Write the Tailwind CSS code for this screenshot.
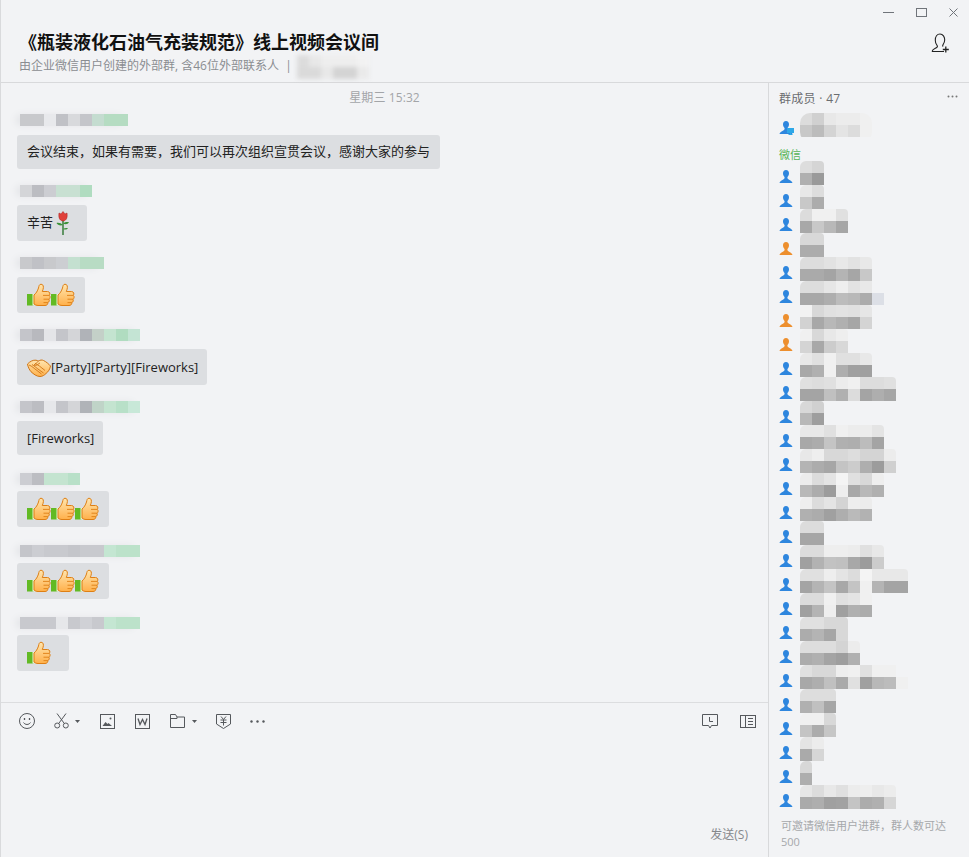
<!DOCTYPE html>
<html lang="zh-CN">
<head>
  <meta charset="UTF-8" />
  <meta name="viewport" content="width=device-width, initial-scale=1.0" />
  <title>群聊</title>
  <script src="https://cdn.jsdelivr.net/npm/@tailwindcss/browser@4"></script>
</head>
<body class="bg-[#f2f3f5] font-['Open_Sans','Noto_Sans_CJK_SC',sans-serif] text-[#222]">

<svg class="absolute w-0 h-0">
  <defs>
    <linearGradient id="hand" x1="0" y1="0" x2="0" y2="1">
      <stop offset="0" stop-color="#ffe6b0" />
      <stop offset="1" stop-color="#ffb04a" />
    </linearGradient>
  </defs>
  <symbol id="thumb" viewBox="0 0 24 24">
    <rect x="0" y="11" width="6.500" height="11.500" fill="#62ba24" />
    <rect x="5.500" y="11" width="1.500" height="11.500" fill="#e4f4cc" />
    <path d="M7 12C9 10.500 10.500 8 11.500 5 12 3 12 1.500 14 1.200 16.500 1.200 16.800 4 16 6.500L15.300 8.500H20.500C22.800 8.500 23.500 11 22.300 12.300 23.600 13.500 23.200 15.500 22 16.200 22.800 17.500 22 19.200 20.800 19.600 21 21.200 20 22.500 18 22.500H11C9.500 22.500 8.200 22 7 21Z" fill="url(#hand)" stroke="#de7f14" stroke-width="1" />
    <path d="M16 12.400h6M16.500 16.200h5.500M16.500 19.600h4.300" stroke="#de7f14" stroke-width=".9" fill="none" />
  </symbol>
  <symbol id="shake" viewBox="0 0 24 18">
    <path d="M.5 5C3 2.500 6 .8 9 1.200c1 .2 1.800.6 2.500.8 1.500-1 3.500-1.300 5-.5 2.500 1.200 5 3.200 7 5.500-.5 3-2 5.500-4.500 7.500-1.500 1.500-3.500 3-6 3-3.500 0-6.500-2.500-9-4.800C2.500 11 1 8 .5 5z" fill="url(#hand)" stroke="#cf7414" stroke-width="1" />
    <path d="M2 6c3 1 5 3.500 8 5.500l4.500 3.500M5 5.500c2.500 1.500 5 4 8 6l3.500 2.500M8 4.500c3 1 5.500 3.500 10 7M11.500 2c-1.500 1.500-3 3-4.500 4 1.800 1 3.500 0 5-1.500l1-.5" fill="none" stroke="#cf7414" stroke-width=".9" />
  </symbol>
  <symbol id="rose" viewBox="0 0 16 24">
    <path d="M8 9v15" stroke="#1f6e22" stroke-width="1.300" />
    <path d="M8 14C6 12 3.500 11.500 1.500 12c1 2 4 3 6.500 2zM8 12.500c2-1.500 4-1.800 6-1.300-1 2-3.500 2.600-6 1.300zM8 18c1.500-1 3.500-1.300 5-.7-1 1.500-3.200 1.700-5 .7z" fill="#3a9138" />
    <path d="M4 2 6 3 8 .5 10 3l2-1c.5 3.500.2 7.500-4 8-4.200-.5-4.500-4.500-4-8z" fill="#e0403a" stroke="#a81e1c" stroke-width=".5" />
  </symbol>
  <symbol id="person" viewBox="0 0 14 14">
    <path d="M7 0c1.900 0 3 1.400 3 3.300 0 1.700-.8 3-1.500 3.800-.2.700-.1 1.500.5 2 1.300.9 3.700 1.600 4.600 3.900H.4c.9-2.300 3.300-3 4.600-3.900.6-.5.700-1.300.5-2C4.800 6.300 4 5 4 3.300 4 1.400 5.100 0 7 0z" fill="currentColor" />
  </symbol>
</svg>

<div class="w-[969px] h-[857px] border-l border-[#d9dadc] flex flex-col overflow-hidden">
  <!-- header -->
  <header class="h-[83px] shrink-0 border-b border-[#d8d9db] flex flex-col">
    <div class="h-[24px] flex justify-end items-center text-[#70747a] pr-[11px]">
      <svg class="w-[11px] h-[9px] mr-[22px]" viewBox="0 0 11 9"><path d="M0 4.500h11" stroke="currentColor" fill="none" /></svg>
      <svg class="w-[11px] h-[9px] mr-[22px]" viewBox="0 0 11 9"><rect x=".5" y=".5" width="10" height="8" stroke="currentColor" fill="none" /></svg>
      <svg class="w-[9px] h-[9px]" viewBox="0 0 9 9"><path d="M.5.5l8 8M8.500.5l-8 8" stroke="currentColor" fill="none" /></svg>
    </div>
    <div class="flex justify-between pl-[18px] pr-[18px]">
      <div>
        <h1 class="text-[18px] leading-[24px] mt-[6px] font-bold text-[#111]">《瓶装液化石油气充装规范》线上视频会议间</h1>
        <div class="flex items-start mt-[3px]">
          <span class="text-[12px] leading-[18px] text-[#8a8d91] whitespace-pre">由企业微信用户创建的外部群, 含46位外部联系人  |</span>
          <div class="ml-[5px] -mt-[2px] blur-[2px]" data-mosaic="[['dcdcdc','e8e8e8','eeeeee','eeeeee','eeeeee','f2f2f2'],['dadada','dadada','e8e8e8','d4d4d4','d4d4d4','eaeaea']]"></div>
        </div>
      </div>
      <svg class="w-[20px] h-[20px] mt-[9px]" viewBox="0 0 20 20" fill="none" stroke="#222" stroke-width="1.100">
        <path d="M1 18.500h12M1 18.500c.6-2.600 3.500-3 5-4.200.7-.7.500-1.700-.2-2.500-1-1.200-1.500-2.700-1.500-4.600C4.300 4 6 1 9 1s4.700 3 4.700 5.700c0 1.900-.5 3.400-1.500 4.600-.6.800-.8 1.500-.2 2.300" />
        <path d="M14.800 13.500v6M11.800 16.500h6" stroke-width="1.300" />
      </svg>
    </div>
  </header>

  <div class="flex flex-1 min-h-0">
    <!-- chat column -->
    <main class="w-[768px] shrink-0 border-r border-[#d8d9db] flex flex-col">
      <section class="h-[620px] shrink-0 border-b border-[#dcdddf] pl-[16px]">
        <div class="w-[735px] text-center text-[12px] leading-[18px] tracking-[0.1px] text-[#a3a5a8] mt-[6px]">星期三 15:32</div>

        <div class="mt-[7px] ml-[3px] w-fit rounded-[6px] shadow-[-5px_0_6px_#e6e7ea]" id="name1"></div>
        <div class="mt-[9px] w-fit h-[34px] rounded-[3px] bg-[#dcdee1] px-[10px] flex items-center text-[13px]">会议结束，如果有需要，我们可以再次组织宣贯会议，感谢大家的参与</div>

        <div class="mt-[16px] ml-[3px] w-fit rounded-[6px] shadow-[-5px_0_6px_#e6e7ea]" id="name2"></div>
        <div class="mt-[8px] w-[70px] h-[36px] rounded-[3px] bg-[#dcdee1] pl-[10px] flex items-center text-[13px]">
          辛苦<svg class="w-[16px] h-[24px] ml-[2px]"><use href="#rose" /></svg>
        </div>

        <div class="mt-[16px] ml-[3px] w-fit rounded-[6px] shadow-[-5px_0_6px_#e6e7ea]" id="name3"></div>
        <div class="mt-[8px] w-[68px] h-[36px] rounded-[3px] bg-[#dcdee1] pl-[10px] flex items-center">
          <svg class="w-[24px] h-[24px]"><use href="#thumb" /></svg><svg class="w-[24px] h-[24px]"><use href="#thumb" /></svg>
        </div>

        <div class="mt-[16px] ml-[3px] w-fit rounded-[6px] shadow-[-5px_0_6px_#e6e7ea]" id="name4"></div>
        <div class="mt-[8px] w-[190px] h-[36px] rounded-[3px] bg-[#dcdee1] pl-[10px] pt-[1px] flex items-center text-[13px]">
          <svg class="w-[24px] h-[18px]"><use href="#shake" /></svg>[Party][Party][Fireworks]
        </div>

        <div class="mt-[16px] ml-[3px] w-fit rounded-[6px] shadow-[-5px_0_6px_#e6e7ea]" id="name5"></div>
        <div class="mt-[8px] w-[86px] h-[34px] rounded-[3px] bg-[#dcdee1] pl-[10px] pt-[1px] flex items-center text-[13px]">[Fireworks]</div>

        <div class="mt-[18px] ml-[3px] w-fit rounded-[6px] shadow-[-5px_0_6px_#e6e7ea]" id="name6"></div>
        <div class="mt-[6px] w-[92px] h-[36px] rounded-[3px] bg-[#dcdee1] pl-[10px] flex items-center">
          <svg class="w-[24px] h-[24px]"><use href="#thumb" /></svg><svg class="w-[24px] h-[24px]"><use href="#thumb" /></svg><svg class="w-[24px] h-[24px]"><use href="#thumb" /></svg>
        </div>

        <div class="mt-[18px] ml-[3px] w-fit rounded-[6px] shadow-[-5px_0_6px_#e6e7ea]" id="name7"></div>
        <div class="mt-[6px] w-[92px] h-[36px] rounded-[3px] bg-[#dcdee1] pl-[10px] flex items-center">
          <svg class="w-[24px] h-[24px]"><use href="#thumb" /></svg><svg class="w-[24px] h-[24px]"><use href="#thumb" /></svg><svg class="w-[24px] h-[24px]"><use href="#thumb" /></svg>
        </div>

        <div class="mt-[18px] ml-[3px] w-fit rounded-[6px] shadow-[-5px_0_6px_#e6e7ea]" id="name8"></div>
        <div class="mt-[6px] w-[52px] h-[36px] rounded-[3px] bg-[#dcdee1] pl-[10px] flex items-center">
          <svg class="w-[24px] h-[24px]"><use href="#thumb" /></svg>
        </div>
      </section>

      <!-- toolbar -->
      <div class="h-[36px] flex items-center pl-[18px] pr-[12px] text-[#55585c] shrink-0">
        <svg class="w-[16px] h-[16px]" viewBox="0 0 16 16" fill="none" stroke="currentColor"><circle cx="8" cy="8" r="7.500" /><path d="M4.500 9.500c1.600 2.600 5.400 2.600 7 0" /><path d="M5.500 5v2M10.500 5v2" stroke-width="1.300" /></svg>
        <svg class="w-[16px] h-[16px] ml-[19px]" viewBox="0 0 16 16" fill="none" stroke="currentColor"><circle cx="3.200" cy="12.500" r="2.500" /><circle cx="11.800" cy="12.500" r="2.500" /><path d="M4.700 10.500 12 .5M10.300 10.500 3 .5" /></svg>
        <svg class="w-[5px] h-[3px] ml-[5px]" viewBox="0 0 5 3"><path d="M0 0h5L2.500 3z" fill="currentColor" /></svg>
        <svg class="w-[15px] h-[15px] ml-[20px]" viewBox="0 0 15 15" fill="none" stroke="currentColor"><rect x=".5" y=".5" width="14" height="14" /><path d="M2.500 12l3-4 2 2 1-1 3.500 3z" fill="currentColor" stroke="none" /><circle cx="10.500" cy="4.500" r="1" fill="currentColor" stroke="none" /></svg>
        <svg class="w-[15px] h-[15px] ml-[20px]" viewBox="0 0 15 15" fill="none" stroke="currentColor"><rect x=".5" y=".5" width="14" height="14" /><path d="M3 4.500l2 6 2.500-5 2.500 5 2-6" stroke-width="1.300" /></svg>
        <svg class="w-[15px] h-[14px] ml-[20px]" viewBox="0 0 15 14" fill="none" stroke="currentColor"><path d="M.5 13.500V.5h5l1.500 2.500h7.500v10.500zM.5 4.500H7L7 3" /></svg>
        <svg class="w-[5px] h-[3px] ml-[7px]" viewBox="0 0 5 3"><path d="M0 0h5L2.500 3z" fill="currentColor" /></svg>
        <svg class="w-[15px] h-[16px] ml-[19px]" viewBox="0 0 15 16" fill="none" stroke="currentColor"><path d="M.5 1.500h14v9.500L7.500 15.500.5 11z" /><path d="M5 3.500l2.500 3 2.500-3M4.500 7h6M4.500 9.500h6M7.500 6.500v6" /></svg>
        <svg class="w-[15px] h-[3px] ml-[19px]" viewBox="0 0 15 3"><circle cx="1.500" cy="1.500" r="1.200" fill="currentColor" /><circle cx="7.500" cy="1.500" r="1.200" fill="currentColor" /><circle cx="13.500" cy="1.500" r="1.200" fill="currentColor" /></svg>
        <svg class="w-[16px] h-[15px] ml-auto" viewBox="0 0 16 15" fill="none" stroke="currentColor"><path d="M.5.500h15v11H9.500L8 14l-1.500-2.500h-6z" /><path d="M7.500 3v4.500H11" /></svg>
        <svg class="w-[16px] h-[13px] ml-[22px]" viewBox="0 0 16 13" fill="none" stroke="currentColor"><rect x=".5" y=".5" width="15" height="12" /><path d="M5.500.5v12M8 3.500h5M8 6.500h5M8 9.500h5" /></svg>
      </div>

      <!-- input -->
      <div class="flex-1 flex items-end justify-end pr-[20px] pb-[13px]">
        <span class="text-[12px] leading-[18px] text-[#85888c]">发送(S)</span>
      </div>
    </main>

    <!-- members -->
    <aside class="flex-1 min-w-0 flex flex-col pl-[10px]">
      <div class="flex items-center justify-between h-[18px] mt-[7px] pr-[11px]">
        <span class="text-[12px] tracking-[0.3px] text-[#6b6d70]">群成员 · 47</span>
        <svg class="w-[11px] h-[3px] -mt-[5px]" viewBox="0 0 11 3"><circle cx="1.500" cy="1.500" r="1" fill="#777" /><circle cx="5.500" cy="1.500" r="1" fill="#777" /><circle cx="9.500" cy="1.500" r="1" fill="#777" /></svg>
      </div>
      <div class="flex h-[24px] mt-[10px] relative">
        <svg class="w-[14px] h-[14px] text-[#2e86de] mt-[3px] shrink-0"><use href="#person" /></svg>
        <svg class="absolute left-[8px] top-[10px] w-[7px] h-[7px]" viewBox="0 0 7 7"><rect width="7" height="5" fill="#2ea8e8" /><path d="M3 5h1v1h1.500v1h-4V6H3z" fill="#2ea8e8" /></svg>
        <div class="ml-[7px] -mt-[5px] rounded-[10px] overflow-hidden" id="owner"></div>
      </div>
      <div class="text-[11px] leading-[14px] text-[#55b455] mt-[6px]">微信</div>
      <ul id="members" class="flex flex-col mt-[7px]"></ul>
      <p class="text-[11px] leading-[16px] text-[#a6a8ab] mt-[1px] pl-[2px] pr-[14px]">可邀请微信用户进群，群人数可达500</p>
    </aside>
  </div>
</div>

<script>
  // pixelated names: rows of 12px cells, colour per cell from the data
  function mosaic(rows) {
    const box = document.createElement("div");
    box.className = "flex flex-col";
    rows.forEach(cells => {
      const row = document.createElement("div");
      row.className = "flex h-[12px]";
      cells.forEach(c => {
        const cell = document.createElement("span");
        cell.className = "w-[12px] h-[12px] shrink-0";
        if (c) cell.style.background = "#" + (c.length == 2 ? c + c + c : c);
        row.appendChild(cell);
      });
      box.appendChild(row);
    });
    return box;
  }

  const names = {
    name1: "c8c9cc c8c9cc e8e9ec c0c1c6 d8d9dc c4c5ca c4dcd0 b5dcc2 b5dcc2",
    name2: "d4d5d8 bcbdc2 cccdd2 c8e0d2 c8e0d2 b0dcc0",
    name3: "c8c9cc c0c1c6 c8c9cc ccced2 c4e0d0 b8dcc4 b8dcc4",
    name4: "c4c5ca b8b9be e4e5e8 c4c5ca d4d5d8 b0b3b8 c4d0c8 c4e4d0 b0dcc0 c4e4d4",
    name5: "c4c5ca bcbdc2 e6e7ea c4c5ca d4d5d8 b0b3b8 c0d4c8 c4e4d0 b8e0c8 c8e8d8",
    name6: "cccdd2 bcbdc2 c4e4d0 c4e4d0 b8e0c8",
    name7: "c4c5ca cccdd2 c8c9ce c8c9ce c4c5ca c8c9ce c8c9ce c4e6d2 bce2ca bce2ca",
    name8: "c8c9ce c8c9ce c8c9ce e6e7ea c8c9ce d0d1d6 c8c9ce c4e6d2 bce2ca bce2ca"
  };
  Object.keys(names).forEach(id => {
    document.getElementById(id).appendChild(mosaic([names[id].split(" ")]));
  });

  document.querySelectorAll("[data-mosaic]").forEach(el => {
    el.appendChild(mosaic(JSON.parse(el.dataset.mosaic.replace(/'/g, '"'))));
  });

  document.getElementById("owner").appendChild(mosaic([
    "dcdcdc d0d0d0 e8e8e8 ececec ececec f0f0f0".split(" "),
    "c8c8c8 bcbcbc d4d4d4 e4e4e4 dcdcdc f0f0f0".split(" ")
  ]));

  // [light row, dark row, orange icon?]
  const members = [
    ["dd d5", "b0 9a"],
    ["e8 dd", "c8 ac"],
    ["dc f0 f0 e0", "a8 c8 b8 a6"],
    ["d8 d8", "ac ac", 1],
    ["dd dd e2 e8 e2 e8", "aa aa a4 b4 a6 c8"],
    ["dd dd e6 ee e2 e8", "a8 a8 ae bc b8 ac dcdfe6"],
    ["f2 d8 e0 e2 e0 e6", "d2 a8 b8 b0 a6 d4", 1],
    ["f0 d8 e8 ee", "d4 a8 cc d8", 1],
    ["e8 e0 f0 e0 e0 e8", "a8 b0 f0 ae a0 a0"],
    ["e0 dd e0 ec f0 dd dd e0", "a4 a4 c0 b0 dc a4 ae a6"],
    ["d8 d0", "b8 9e"],
    ["e8 e8 e0 f0 ec ec e4", "a8 ac c4 b0 ae bc a4"],
    ["e8 ee d8 d8 dd d4 d4 ec", "b4 ac a6 c4 cc ae 9c d0"],
    ["ec dc e4 f4 e0 d8 ee", "b8 ac 9c ee a8 b8 b0"],
    ["ee dc e4 d4 ee ec", "b0 ac a0 ae ba b2"],
    ["dc dc", "a6 a6"],
    ["dc dc ee ee ec e0 e8", "a0 b2 c2 c0 a8 9c cc"],
    ["e0 e0 ee e4 dc f4 e8 e8 e8", "a4 b4 c4 a8 c4 f0 b4 a4 a4"],
    ["dc dc f0 e0 e4 f0", "a0 b4 ee a0 b0 ac"],
    ["e0 e0 d8 d8", "ac b4 a6 d8"],
    ["dd dd dd d4 ec", "ac b0 a4 9e b0"],
    ["e0 d8 d8 ee f0 e0 f0 f0", "a8 ae c0 aa e0 a0 b8 bc f0"],
    ["dd dd dd", "b0 c0 a6"],
    ["f0 f0 d8", "c4 ac c6"],
    ["e4 ec", "aa d6"],
    ["d8", "ae"],
    ["e6 dc e8 e0 ec ee e8 ec", "aa ae a0 a2 c4 ac b0 d6"]
  ];
  const list = document.getElementById("members");
  members.forEach(m => {
    const li = document.createElement("li");
    li.className = "flex h-[24px]";
    const color = m[2] ? "text-[#ed8f2e]" : "text-[#2e86de]";
    li.innerHTML = '<svg class="w-[14px] h-[14px] mt-[1px] shrink-0 ' + color + '"><use href="#person" /></svg>';
    const wrap = document.createElement("div");
    wrap.className = "ml-[7px] -mt-[8px] rounded-tl-[6px] rounded-tr-[4px] overflow-hidden";
    wrap.appendChild(mosaic([m[0].split(" "), m[1].split(" ")]));
    li.appendChild(wrap);
    list.appendChild(li);
  });
</script>
</body>
</html>
